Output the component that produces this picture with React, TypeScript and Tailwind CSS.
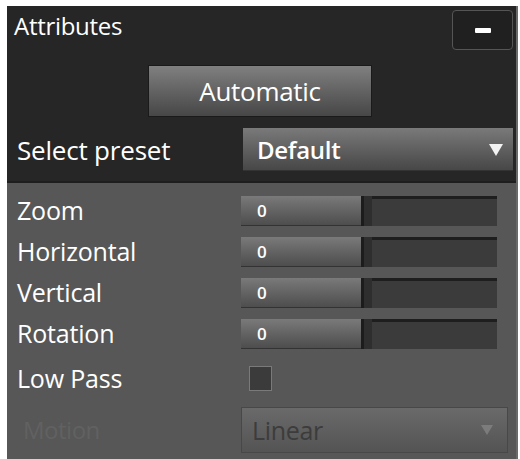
const rows = ["Zoom", "Horizontal", "Vertical", "Rotation"]

function Slider({ value }: { value: number }) {
  return (
    <div className="flex h-[30px] w-[256px]">
      <div className="flex w-[120px] items-center bg-gradient-to-b from-[#7a7a7a] to-[#4c4c4c] pl-[16px] text-[17px] font-semibold leading-none text-white shadow-[inset_0_-1px_0_#333]">
        {value}
      </div>
      <div className="w-[11px] border-l-[3px] border-[#1c1c1c] bg-[#2e2e2e]" />
      <div className="flex-1 border-t-[3px] border-[#1e1e1e] bg-[#3b3b3b]" />
    </div>
  )
}

export default function App() {
  return (
    <div className="h-[459px] w-[520px] bg-white pl-[7px] pt-[6px]" style={{ fontFamily: '"Open Sans", "DejaVu Sans", sans-serif' }}>
      <div className="flex h-full w-[511px] flex-col border-r-2 border-[#6a6a6a]">
        {/* dark header */}
        <div className="bg-[#262626]">
          <div className="flex items-start justify-between pt-[4px] pr-[3px]">
            <span className="pl-[7px] pt-[4px] text-[24px] font-medium leading-none tracking-[-0.3px] text-white">Attributes</span>
            <button className="flex h-[40px] w-[61px] items-center justify-center rounded-[4px] border border-[#555] bg-[#202020]">
              <span className="h-[5px] w-[16px] rounded-[1px] bg-white" />
            </button>
          </div>
          <div className="mt-[15px] flex pl-[141px]">
            <button className="flex h-[52px] w-[224px] items-center justify-center border border-[#1a1a1a] bg-gradient-to-b from-[#808080] to-[#474747] text-[26px] font-medium leading-none tracking-[-0.3px] text-white">
              Automatic
            </button>
          </div>
          <div className="mt-[11px] flex items-center justify-between pb-[10px] pl-[10px] pr-[3px]">
            <span className="text-[26px] font-medium leading-none tracking-[-0.2px] text-white">Select preset</span>
            <div className="flex h-[43px] w-[270px] items-center justify-between bg-gradient-to-b from-[#7a7a7a] to-[#464646] pl-[14px] pr-[10px] shadow-[inset_0_-1px_0_#333]">
              <span className="text-[24px] font-semibold leading-none tracking-[-0.3px] text-white">Default</span>
              <svg width="14" height="12" viewBox="0 0 14 12">
                <path d="M0 0 H14 L7 12 Z" fill="#f2f2f2" />
              </svg>
            </div>
          </div>
        </div>
        {/* body */}
        <div className="flex-1 border-t-2 border-[#1e1e1e] bg-[#575757] pl-[10px] pt-[7px]">
          {rows.map((r) => (
            <div key={r} className="flex h-[41px] items-center">
              <span className="w-[224px] text-[25px] font-medium leading-none tracking-[-0.2px] text-white">{r}</span>
              <Slider value={0} />
            </div>
          ))}
          <div className="flex h-[48px] items-center">
            <span className="w-[232px] text-[25px] font-medium leading-none tracking-[-0.2px] text-white">Low Pass</span>
            <div className="h-[25px] w-[23px] border border-[#7a7a7a] bg-[#3b3b3b]" />
          </div>
          <div className="mt-[5px] flex items-center">
            <span className="w-[224px] pl-[6px] text-[24px] leading-none tracking-[-0.5px] text-[#616161]">Motion</span>
            <div className="flex h-[46px] w-[267px] items-center justify-between border border-[#484848] bg-gradient-to-b from-[#6a6a6a] to-[#545454] pl-[10px] pr-[14px]">
              <span className="text-[25px] leading-none tracking-[-0.3px] text-[#3c3c3c]">Linear</span>
              <svg width="12" height="10" viewBox="0 0 12 10">
                <path d="M0 0 H12 L6 10 Z" fill="#7c7c7c" />
              </svg>
            </div>
          </div>
        </div>
      </div>
    </div>
  )
}
